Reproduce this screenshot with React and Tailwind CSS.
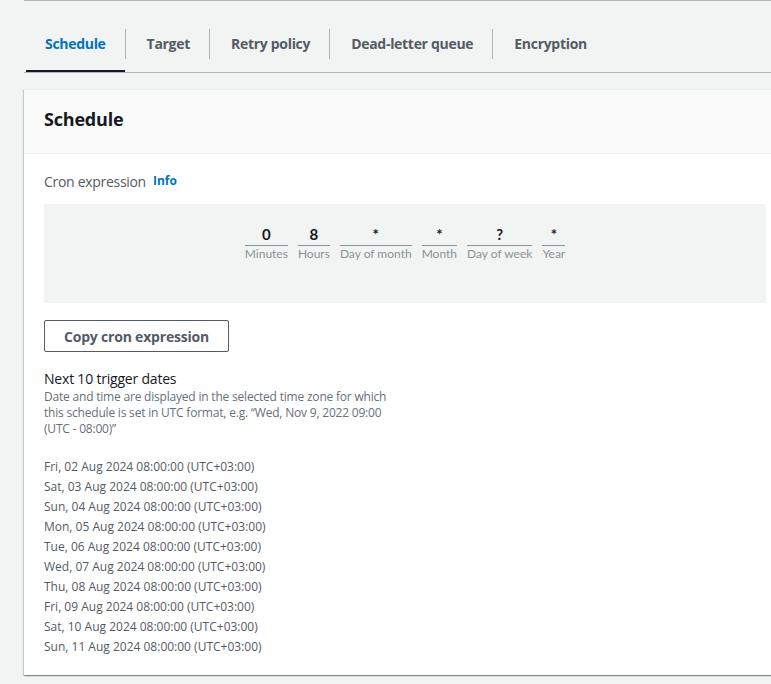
import React from "react";

const tabs = ["Schedule", "Target", "Retry policy", "Dead-letter queue", "Encryption"];

const cronFields = [
  { value: "0", label: "Minutes" },
  { value: "8", label: "Hours" },
  { value: "*", label: "Day of month" },
  { value: "*", label: "Month" },
  { value: "?", label: "Day of week" },
  { value: "*", label: "Year" },
];

const triggerDates = [
  "Fri, 02 Aug 2024 08:00:00 (UTC+03:00)",
  "Sat, 03 Aug 2024 08:00:00 (UTC+03:00)",
  "Sun, 04 Aug 2024 08:00:00 (UTC+03:00)",
  "Mon, 05 Aug 2024 08:00:00 (UTC+03:00)",
  "Tue, 06 Aug 2024 08:00:00 (UTC+03:00)",
  "Wed, 07 Aug 2024 08:00:00 (UTC+03:00)",
  "Thu, 08 Aug 2024 08:00:00 (UTC+03:00)",
  "Fri, 09 Aug 2024 08:00:00 (UTC+03:00)",
  "Sat, 10 Aug 2024 08:00:00 (UTC+03:00)",
  "Sun, 11 Aug 2024 08:00:00 (UTC+03:00)",
];

const App = () => {
  return (
    <div
      className="w-[771px] h-[684px] overflow-hidden bg-[#f2f3f3] pl-6 text-[#16191f]"
      style={{ fontFamily: '"Open Sans", Arial, sans-serif' }}
    >
      {/* bottom edge of the panel above */}
      <div className="w-[762px] h-px bg-[#aab7b8]" />

      {/* TABS */}
      <div className="w-[762px] mt-[28px] border-b border-[#aab7b8] flex">
        {tabs.map((tab, i) =>
          i === 0 ? (
            <div key={tab} className="ml-[2px] h-[43px] flex flex-col justify-between">
              <div className="h-[30px] px-[19px] flex items-center pb-[2px] text-[14px] font-bold text-[#0073bb] tracking-[-0.3px]">
                {tab}
              </div>
              <div className="h-[2px] bg-[#16191f]" />
            </div>
          ) : (
            <div key={tab} className="h-[43px] flex">
              <div className="w-px h-[30px] bg-[#aab7b8]" />
              <div className="h-[30px] pl-[21px] pr-[19px] flex items-center pb-[2px] text-[14px] font-bold text-[#545b64] tracking-[-0.3px]">
                {tab}
              </div>
            </div>
          )
        )}
      </div>

      {/* SCHEDULE PANEL */}
      <div className="w-[762px] mt-[16px] bg-white shadow-[0_1px_1px_0_rgba(0,28,36,0.3),1px_1px_1px_0_rgba(0,28,36,0.15),-1px_1px_1px_0_rgba(0,28,36,0.15)] border-t border-[#eaeded]">
        <div className="h-[64px] bg-[#fafafa] border-b border-[#eaeded] px-5 pb-[4px] flex items-center">
          <h2 className="text-[18px] font-bold tracking-[-0.2px]">Schedule</h2>
        </div>

        <div className="px-5 pt-[17px] pb-[18px]">
          <div className="flex items-center gap-[7px] h-[20px]">
            <span className="text-[14px] text-[#545b64] tracking-[-0.3px]">Cron expression</span>
            <span className="text-[12px] font-bold text-[#0073bb]">Info</span>
          </div>

          {/* CRON BOX */}
          <div className="mt-[13px] h-[99px] bg-[#f2f3f3] flex justify-center pt-[21px]">
            <div className="flex gap-[10px]" style={{ fontFamily: "Lato, sans-serif" }}>
              {cronFields.map((f, i) => (
                <div key={i} className="flex flex-col items-stretch">
                  <div className="text-center text-[15px] font-bold leading-[19px] border-b border-[#879596] pb-[1px] text-[#16191f]">
                    {f.value}
                  </div>
                  <div className="text-[12px] leading-[16px] text-[#879596]">{f.label}</div>
                </div>
              ))}
            </div>
          </div>

          <button className="mt-[17px] h-[32px] px-[19px] border border-[#545b64] rounded-[2px] text-[14px] font-bold text-[#545b64] bg-white tracking-[-0.2px]">
            Copy cron expression
          </button>

          <div className="mt-[17px] text-[14px] leading-[20px] tracking-[-0.2px]">Next 10 trigger dates</div>
          <div className="whitespace-nowrap text-[12px] leading-[16px] text-[#687078] tracking-[-0.2px]">
            Date and time are displayed in the selected time zone for which
            <br />
            this schedule is set in UTC format, e.g. “Wed, Nov 9, 2022 09:00
            <br />
            (UTC - 08:00)”
          </div>

          <div className="mt-[20px] flex flex-col">
            {triggerDates.map((d) => (
              <div key={d} className="text-[12px] leading-[20px] text-[#545b64]">
                {d}
              </div>
            ))}
          </div>
        </div>
      </div>
    </div>
  );
};

export default App;
